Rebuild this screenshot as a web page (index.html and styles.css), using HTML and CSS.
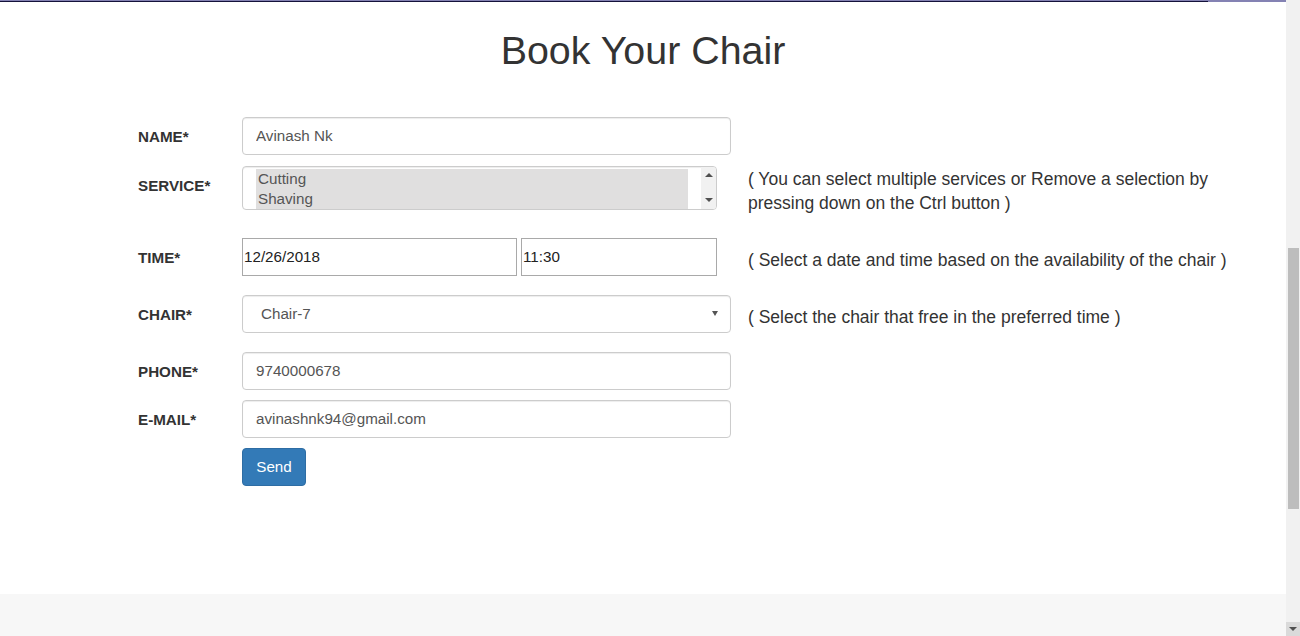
FILE: index.html
```html
<!DOCTYPE html>
<html lang="en">
<head>
<meta charset="utf-8">
<title>Book Your Chair</title>
<link rel="stylesheet" href="styles.css">
</head>
<body>
<div class="page">
  <div class="main">
    <div class="topbar"><div class="topbar-fill"></div></div>
    <h1 class="title">Book Your Chair</h1>
    <form class="booking">
      <div class="row row-name">
        <label class="label">NAME*</label>
        <div class="field"><input class="control" type="text" value="Avinash Nk"></div>
        <div class="help"></div>
      </div>
      <div class="row row-service">
        <label class="label">SERVICE*</label>
        <div class="field">
          <div class="multi">
            <div class="multi-list">
              <div class="multi-opt">Cutting</div>
              <div class="multi-opt">Shaving</div>
            </div>
            <div class="multi-space"></div>
            <div class="multi-bar">
              <span class="tri tri-up"></span>
              <span class="tri tri-down"></span>
            </div>
          </div>
        </div>
        <div class="help help-top">( You can select multiple services or Remove a selection by pressing down on the Ctrl button )</div>
      </div>
      <div class="row row-time">
        <label class="label">TIME*</label>
        <div class="field field-split">
          <input class="plain plain-date" type="text" value="12/26/2018">
          <input class="plain plain-time" type="text" value="11:30">
        </div>
        <div class="help">( Select a date and time based on the availability of the chair )</div>
      </div>
      <div class="row row-chair">
        <label class="label">CHAIR*</label>
        <div class="field">
          <div class="select">
            <span class="select-value">Chair-7</span>
            <span class="tri tri-small"></span>
          </div>
        </div>
        <div class="help">( Select the chair that free in the preferred time )</div>
      </div>
      <div class="row row-phone">
        <label class="label">PHONE*</label>
        <div class="field"><input class="control" type="text" value="9740000678"></div>
        <div class="help"></div>
      </div>
      <div class="row row-email">
        <label class="label">E-MAIL*</label>
        <div class="field"><input class="control" type="text" value="avinashnk94@gmail.com"></div>
        <div class="help"></div>
      </div>
      <div class="row row-send">
        <div class="label"></div>
        <div class="field"><button class="btn" type="button">Send</button></div>
        <div class="help"></div>
      </div>
    </form>
    <div class="footer"></div>
  </div>
  <div class="scrollbar">
    <div class="sb-thumb"></div>
    <div class="sb-space"></div>
    <div class="sb-down"><span class="tri tri-sb"></span></div>
  </div>
</div>
</body>
</html>
```
FILE: styles.css
```css
* { box-sizing: border-box; }

html, body {
  margin: 0;
  padding: 0;
  height: 636px;
  overflow: hidden;
  background: #fff;
  font-family: "Liberation Sans", Arial, Helvetica, sans-serif;
  color: #333;
}

.page {
  display: flex;
  width: 1300px;
  height: 636px;
}

.main {
  width: 1286px;
  display: flex;
  flex-direction: column;
}

.topbar {
  height: 2px;
  background: #8482b3;
  display: flex;
  align-items: flex-end;
}

.topbar-fill {
  width: 1208px;
  height: 1px;
  background: #14123a;
}

.title {
  margin: 27px 0 0;
  font-size: 39.4px;
  line-height: 42px;
  font-weight: 400;
  text-align: center;
  color: #333;
}

.booking {
  padding: 46px 0 0 138px;
  margin: 0;
}

.row {
  display: grid;
  grid-template-columns: 87px 489px 490px;
  column-gap: 17px;
  height: 38px;
  margin-bottom: 11px;
}

.row-service { height: 44px; margin-bottom: 28px; }
.row-time { margin-bottom: 19px; }
.row-chair { margin-bottom: 19px; }
.row-phone { margin-bottom: 10px; }
.row-email { margin-bottom: 10px; }
.row-send { margin-bottom: 108px; }

.label {
  padding-top: 8.6px;
  font-size: 15.2px;
  line-height: 22px;
  font-weight: 700;
  color: #333;
  white-space: nowrap;
}

.field {
  height: 100%;
}

.control {
  display: block;
  width: 100%;
  height: 38px;
  margin: 0;
  padding: 0 13px 2px;
  border: 1px solid #ccc;
  border-radius: 4px;
  box-shadow: inset 0 1px 1px rgba(0, 0, 0, 0.075);
  font-family: "Liberation Sans", Arial, Helvetica, sans-serif;
  font-size: 15.2px;
  color: #555;
  background: #fff;
  outline: none;
}

.multi {
  display: flex;
  width: 475px;
  height: 44px;
  padding: 2px 0 0 13px;
  border: 1px solid #ccc;
  border-radius: 4px;
  box-shadow: inset 0 1px 1px rgba(0, 0, 0, 0.075);
  overflow: hidden;
}

.multi-list {
  width: 432px;
}

.multi-opt {
  height: 20px;
  padding-left: 2px;
  line-height: 20px;
  font-size: 15.2px;
  color: #555;
  background: #e0dfdf;
}

.multi-space { flex: 1; }

.multi-bar {
  width: 15px;
  margin-top: -2px;
  background: #f1f1f1;
  display: flex;
  flex-direction: column;
  justify-content: space-between;
  align-items: center;
  padding: 6px 0 7px;
}

.tri {
  display: block;
  width: 0;
  height: 0;
  border-left: 4px solid transparent;
  border-right: 4px solid transparent;
}

.tri-up { border-bottom: 4px solid #505050; }
.tri-down { border-top: 4px solid #505050; }

.field-split {
  display: flex;
  gap: 4px;
}

.plain {
  display: block;
  height: 38px;
  margin: 0;
  padding: 0 1px 2px;
  border: 1px solid #a9a9a9;
  border-radius: 0;
  font-family: "Liberation Sans", Arial, Helvetica, sans-serif;
  font-size: 15.2px;
  color: #222;
  background: #fff;
  outline: none;
}

.plain-date { width: 275px; }
.plain-time { width: 196px; }

.select {
  display: flex;
  align-items: center;
  justify-content: space-between;
  width: 100%;
  height: 38px;
  padding: 0 12px 2px 18px;
  border: 1px solid #ccc;
  border-radius: 4px;
  box-shadow: inset 0 1px 1px rgba(0, 0, 0, 0.075);
  font-size: 15.2px;
  color: #555;
}

.tri-small {
  border-left-width: 3px;
  border-right-width: 3px;
  border-top: 5px solid #555;
}

.help {
  padding-top: 10px;
  font-size: 17.5px;
  line-height: 24px;
  color: #333;
}

.help-top { padding-top: 1px; }

.btn {
  display: block;
  width: 64px;
  height: 38px;
  margin: 0;
  padding: 0 0 2px;
  border: 1px solid #2e6da4;
  border-radius: 4px;
  background: #337ab7;
  color: #fff;
  font-family: "Liberation Sans", Arial, Helvetica, sans-serif;
  font-size: 15.2px;
  cursor: pointer;
}

.footer {
  flex: 1;
  background: #f7f7f7;
}

.scrollbar {
  width: 14px;
  height: 636px;
  background: #f1f1f1;
  display: flex;
  flex-direction: column;
  padding-top: 248px;
}

.sb-thumb {
  height: 261px;
  margin: 0 1px 0 2px;
  background: #bdbdbd;
}

.sb-space { flex: 1; }

.sb-down {
  height: 14px;
  background: #dadada;
  display: flex;
  align-items: center;
  justify-content: center;
}

.tri-sb { border-top: 4px solid #505050; }
```
